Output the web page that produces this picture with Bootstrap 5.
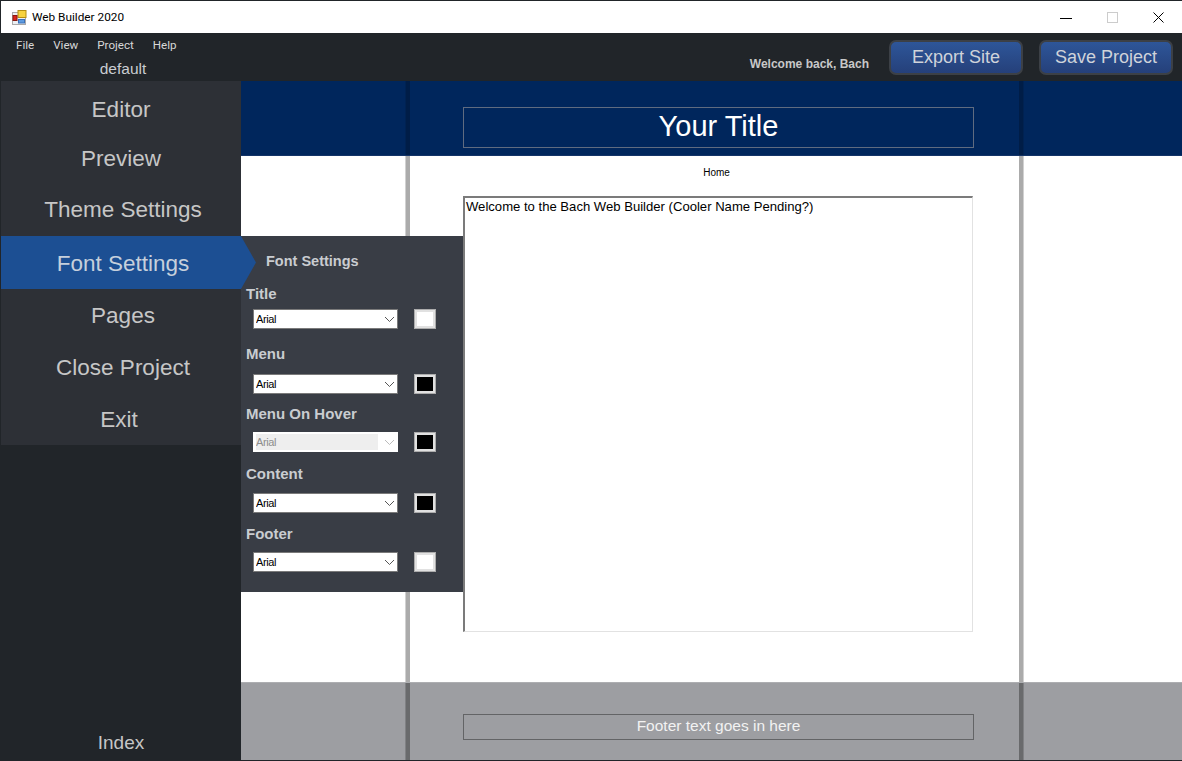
<!DOCTYPE html>
<html lang="en">
<head>
    <meta charset="UTF-8">
    <title>Web Builder 2020</title>
    <meta name="viewport" content="width=device-width, initial-scale=1">

    <link href="https://cdn.jsdelivr.net/npm/bootstrap@5.3.0/dist/css/bootstrap.min.css" rel="stylesheet">

    <style>
        html, body { height: 100%; overflow: hidden; }
        body { font-family: "Liberation Sans", Arial, sans-serif; background: #212529; }
        .app-window { height: 761px; border: 1px solid #212529; border-width: 1px 0 1px 1px; position: relative; }

        .title-bar { height: 32px; background: #fff; color: #000; font: 11.8px Roboto, sans-serif; padding-left: 11px; }
        .title-bar svg.app-icon { margin-right: 5px; }
        .win-btn { width: 46px; height: 32px; border: 0; background: none; padding: 0; }
        .win-btns { padding-right: 1px; }

        .top-strip { height: 48px; background: #212529; }
        .top-left { width: 240px; }
        .menu-strip .nav-link { font: 11.6px Roboto, sans-serif; color: #d8d8d8; padding: 5px 0 0; margin-right: 19px; }
        .menu-strip { padding-left: 15px; }
        .project-name { font-size: 15.5px; color: #c9cdd2; text-align: center; line-height: 18px; margin-top: 8px; padding-left: 4px; }
        .welcome-text { font-size: 12px; font-weight: 700; color: #c8c8c8; margin-right: 20px; margin-top: 13px; }
        .top-btn { width: 134px; height: 35px; padding: 0; font-size: 18px; color: #cfd3da; border: 2px solid #3c4046; border-radius: 7px; background: linear-gradient(#2e5699, #25407a); }
        .top-btn:hover { color: #cfd3da; border-color: #3c4046; }
        .top-btns { gap: 16px; padding-right: 9px; }

        .work-area { height: 679px; }
        .side-bar { width: 240px; background: #212529; }
        .side-nav { background: #2d3036; }
        .side-nav .nav-link { font-size: 22.5px; color: #c6c6c6; text-align: center; padding: 0; display: flex; align-items: center; justify-content: center; }
        .side-nav .nav-link.active { background: #1c4f93; color: #c6d0dc; }
        .item-tall { height: 53px; }
        .item-mid { height: 52px; }
        .item-short { height: 50px; }
        .side-nav .nav-link.nudge-right { padding-left: 4px; }
        .side-nav .nav-link.nudge-left { padding-right: 4px; }
        .side-nav .nav-link.nudge-down { padding-top: 2px; }
        .side-nav .nav-link.nudge-down-more { padding-top: 4px; }
        .side-index { font-size: 19px; color: #c6c6c6; text-align: center; line-height: 24px; padding-bottom: 5px; }

        .page-canvas { background: #fff; }
        .band-head { height: 75px; background: #00265c; border-bottom: 1px solid #143468; }
        .band-body { height: 526px; background: #fff; }
        .band-foot { height: 78px; background: #9d9ea2; border-top: 1px solid #adaeb1; }
        .page-col { display: flow-root; margin-left: 165px; width: 617px; height: 100%; border-left: 4px solid rgba(0, 0, 0, .33); border-right: 4px solid rgba(0, 0, 0, .33); box-shadow: -1px 0 rgba(0, 0, 0, .18), 1px 0 rgba(0, 0, 0, .18); padding: 0 45px 0 53px; }
        .band-head .page-col { border-color: rgba(0, 0, 0, .22); box-shadow: -1px 0 rgba(0, 0, 0, .1), 1px 0 rgba(0, 0, 0, .1); }
        .title-box { height: 41px; margin-top: 26px; border: 1px solid #5f6b80; color: #fff; font-size: 29px; text-align: center; line-height: 36px; }
        .page-menu { font-size: 10px; color: #000; text-align: center; line-height: 12px; padding-top: 11px; margin-left: -49px; margin-right: -45px; }
        .content-box { width: 510px; height: 436px; margin-top: 17px; border: 1px solid #e2e2e2; border-top: 2px solid #7b7b7b; border-left: 2px solid #7b7b7b; font-size: 13.1px; color: #000; line-height: 16px; padding: 1px; resize: none; border-radius: 0; font-family: inherit; display: block; outline: 0; }
        .foot-box { height: 26px; margin-top: 31px; border: 1px solid #636466; color: #f2f2f2; font-size: 15.5px; text-align: center; line-height: 21px; }

        .font-panel { position: absolute; left: 240px; top: 235px; width: 222px; height: 356px; background: #393d45; color: #c9ccd0; }
        .panel-arrow { position: absolute; left: 0; top: 0; width: 15px; height: 53px; background: #1c4f93; clip-path: polygon(0 0, 100% 50%, 0 100%); }
        .panel-title { font-size: 14.5px; font-weight: 700; padding: 16px 0 0 25px; line-height: 18px; }
        .font-label { font-size: 15px; font-weight: 700; line-height: 16px; margin: 0 0 0 5px; display: block; }
        .font-row { padding-left: 12px; gap: 16px; }
        .font-select.form-select { width: 145px; height: 20px; padding: 0 0 0 2px; font-size: 11px; letter-spacing: -.4px; line-height: 16px; color: #000; border: 1px solid #7a7a7a; border-radius: 0; background-color: #fff; background-size: 11px 7px; background-position: right 2px center; background-image: url("data:image/svg+xml,%3csvg xmlns='http://www.w3.org/2000/svg' viewBox='0 0 11 7'%3e%3cpath fill='none' stroke='%23555' d='M1 1l4.500 4.500L10 1'/%3e%3c/svg%3e"); }
        .font-select.form-select:disabled { color: #8d8d8d; border-color: #fff; opacity: 1; outline: 0; background-color: #fff; background-image: url("data:image/svg+xml,%3csvg xmlns='http://www.w3.org/2000/svg' viewBox='0 0 11 7'%3e%3cpath fill='none' stroke='%23bbb' d='M1 1l4.500 4.500L10 1'/%3e%3c/svg%3e"), linear-gradient(#eeeeee, #eeeeee); background-size: 11px 7px, 122px 16px; background-position: right 2px center, 2px center; background-repeat: no-repeat; }
        .colour-swatch { width: 22px; height: 20px; padding: 0; border: 1px solid #adadad; outline: 2px solid #e1e1e1; outline-offset: -3px; border-radius: 0; }
        .swatch-white, .swatch-white:disabled { background: #fff; }
        .swatch-black, .swatch-black:disabled { background: #000; }
        .mt-7px { margin-top: 7px; }
        .mt-10px { margin-top: 10px; }
        .mt-11px { margin-top: 11px; }
        .mt-12px { margin-top: 12px; }
        .mt-13px { margin-top: 13px; }
        .mt-14px { margin-top: 14px; }
        .mt-16px { margin-top: 16px; }
        .mt-17px { margin-top: 17px; }
    </style>
</head>
<body>
    <div class="app-window d-flex flex-column">

        <!-- Title bar -->
        <div class="title-bar d-flex align-items-center">
            <svg class="app-icon" width="15" height="15" viewBox="0 0 15 15">
                <rect x="0.5" y="2.5" width="13" height="12" fill="#eceff3" stroke="#a9a9a9"/>
                <rect x="6" y="0.5" width="8" height="7" fill="#f7d340" stroke="#b58f12"/>
                <rect x="1" y="5.500" width="4" height="5" fill="#d8261c" stroke="#8c1a12"/>
                <rect x="6.500" y="9.500" width="6" height="3.500" fill="#5e9be0" stroke="#3a70b8"/>
            </svg>
            <span>Web Builder 2020</span>
            <div class="win-btns d-flex ms-auto">
                <button class="win-btn" type="button" aria-label="Minimize">
                    <svg width="12" height="12" viewBox="0 0 12 12"><path d="M0 6.500h12" stroke="#000"/></svg>
                </button>
                <button class="win-btn" type="button" aria-label="Maximize">
                    <svg width="11" height="11" viewBox="0 0 11 11"><rect x=".5" y=".5" width="10" height="10" fill="none" stroke="#ccc"/></svg>
                </button>
                <button class="win-btn" type="button" aria-label="Close">
                    <svg width="11" height="11" viewBox="0 0 11 11"><path d="M.5.500l10 10M10.500.500l-10 10" stroke="#000"/></svg>
                </button>
            </div>
        </div>

        <!-- Menu + top buttons -->
        <div class="top-strip d-flex">
            <div class="top-left">
                <nav class="menu-strip nav">
                    <a class="nav-link" href="#">File</a>
                    <a class="nav-link" href="#">View</a>
                    <a class="nav-link" href="#">Project</a>
                    <a class="nav-link" href="#">Help</a>
                </nav>
                <div class="project-name">default</div>
            </div>
            <div class="d-flex align-items-center ms-auto">
                <span class="welcome-text">Welcome back, Bach</span>
                <div class="top-btns d-flex">
                    <button class="btn top-btn" type="button">Export Site</button>
                    <button class="btn top-btn" type="button">Save Project</button>
                </div>
            </div>
        </div>

        <div class="work-area d-flex">
            <!-- Sidebar -->
            <div class="side-bar d-flex flex-column">
                <nav class="side-nav nav flex-column">
                    <a class="nav-link item-tall nudge-down-more" href="#">Editor</a>
                    <a class="nav-link item-short" href="#">Preview</a>
                    <a class="nav-link item-mid nudge-right" href="#">Theme Settings</a>
                    <a class="nav-link active item-tall nudge-right nudge-down" href="#">Font Settings</a>
                    <a class="nav-link item-mid nudge-right nudge-down" href="#">Pages</a>
                    <a class="nav-link item-mid nudge-right nudge-down" href="#">Close Project</a>
                    <a class="nav-link item-mid nudge-left nudge-down" href="#">Exit</a>
                </nav>
                <div class="side-index mt-auto">Index</div>
            </div>

            <!-- Page being edited -->
            <div class="page-canvas flex-grow-1">
                <div class="band-head">
                    <div class="page-col"><div class="title-box">Your Title</div></div>
                </div>
                <div class="band-body">
                    <div class="page-col">
                        <div class="page-menu">Home</div>
                        <textarea class="content-box">Welcome to the Bach Web Builder (Cooler Name Pending?)</textarea>
                    </div>
                </div>
                <div class="band-foot">
                    <div class="page-col"><div class="foot-box">Footer text goes in here</div></div>
                </div>
            </div>
        </div>

        <!-- Font settings flyout -->
        <div class="font-panel">
            <div class="panel-arrow"></div>
            <div class="panel-title">Font Settings</div>

            <label class="font-label mt-16px">Title</label>
            <div class="font-row d-flex align-items-center mt-7px">
                <select class="form-select font-select"><option>Arial</option></select>
                <button class="btn colour-swatch swatch-white" type="button" aria-label="Title colour"></button>
            </div>

            <label class="font-label mt-17px">Menu</label>
            <div class="font-row d-flex align-items-center mt-12px">
                <select class="form-select font-select"><option>Arial</option></select>
                <button class="btn colour-swatch swatch-black" type="button" aria-label="Menu colour"></button>
            </div>

            <label class="font-label mt-12px">Menu On Hover</label>
            <div class="font-row d-flex align-items-center mt-10px">
                <select class="form-select font-select" disabled><option>Arial</option></select>
                <button class="btn colour-swatch swatch-black" type="button" aria-label="Menu hover colour"></button>
            </div>

            <label class="font-label mt-14px">Content</label>
            <div class="font-row d-flex align-items-center mt-11px">
                <select class="form-select font-select"><option>Arial</option></select>
                <button class="btn colour-swatch swatch-black" type="button" aria-label="Content colour"></button>
            </div>

            <label class="font-label mt-13px">Footer</label>
            <div class="font-row d-flex align-items-center mt-10px">
                <select class="form-select font-select"><option>Arial</option></select>
                <button class="btn colour-swatch swatch-white" type="button" aria-label="Footer colour"></button>
            </div>
        </div>
    </div>

    <script src="https://cdn.jsdelivr.net/npm/bootstrap@5.3.0/dist/js/bootstrap.bundle.min.js"></script>
</body>
</html>
